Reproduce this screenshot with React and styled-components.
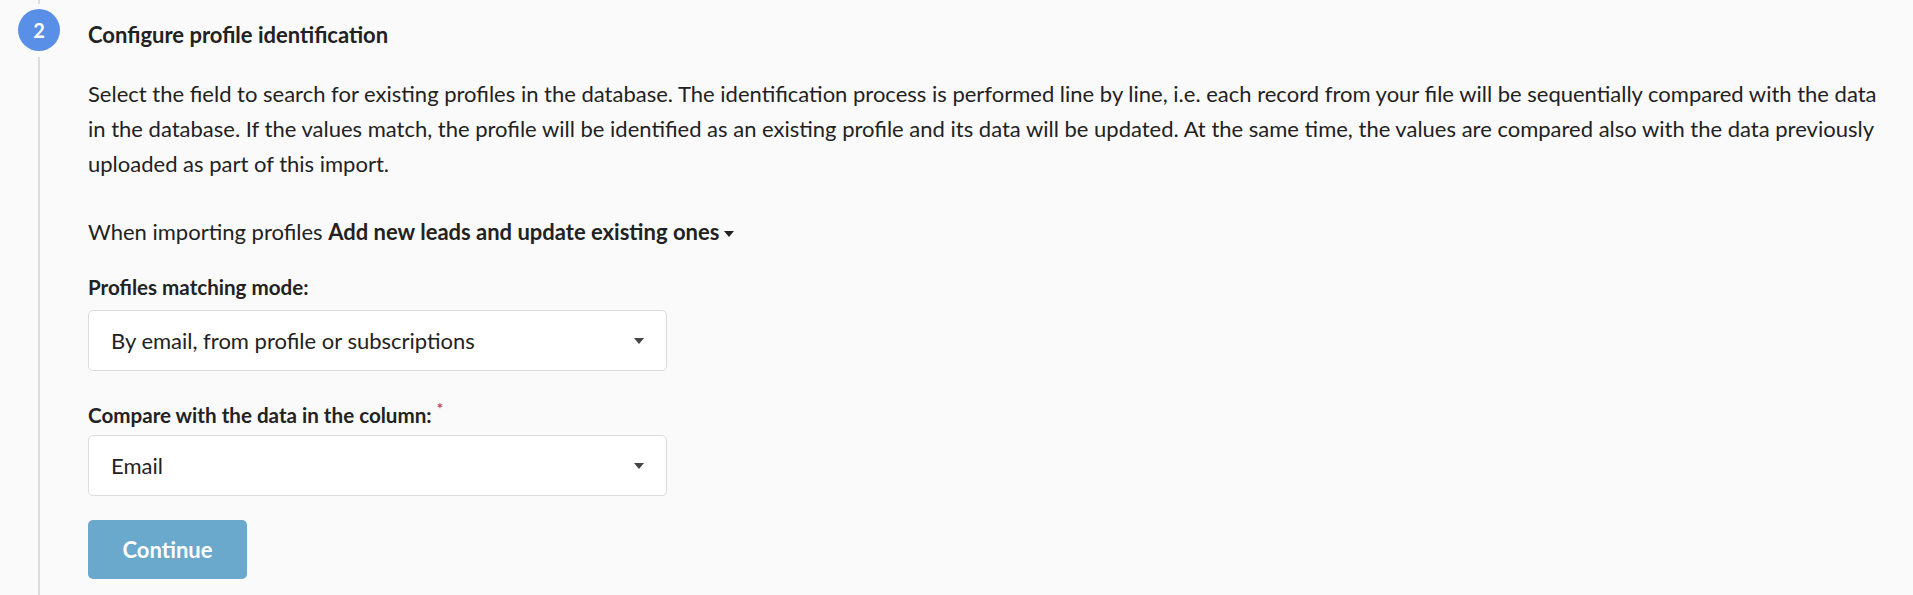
import React from 'react'
import styled, {createGlobalStyle} from 'styled-components'

const GlobalStyle = createGlobalStyle`
  html, body {
    margin: 0;
    padding: 0;
    background: #fafafa;
  }
  body {
    font-family: Lato, "Liberation Sans", sans-serif;
    color: #222;
  }
`

const Step = styled.div`
  display: flex;
  min-height: 100vh;
`

const Rail = styled.div`
  display: flex;
  flex-direction: column;
  align-items: center;
  width: 42px;
  margin-left: 18px;
  flex-shrink: 0;
`

const RailLine = styled.div`
  width: 2px;
  background: #dddddd;
  height: ${p => (p.$grow ? 'auto' : '4px')};
  flex: ${p => (p.$grow ? 1 : 'none')};
  margin: ${p => (p.$grow ? '6px 0 0' : '0 0 5px')};
`

const Badge = styled.div`
  width: 42px;
  height: 42px;
  border-radius: 50%;
  background: #5a8fe7;
  color: #fff;
  display: flex;
  align-items: center;
  justify-content: center;
  font-size: 20px;
  font-weight: 700;
`

const Content = styled.div`
  flex: 1;
  margin-left: 28px;
  padding-right: 30px;
  padding-bottom: 20px;
`

const Title = styled.h3`
  margin: 20px 0 0;
  font-size: 22px;
  line-height: 30px;
  font-weight: 700;
`

const Text = styled.p`
  margin: 26px 0 0;
  font-size: 22px;
  line-height: 35px;
`

const ModeLine = styled.div`
  margin-top: 33px;
  font-size: 22px;
  line-height: 35px;
`

const ModeToggle = styled.span`
  font-weight: 700;
  cursor: pointer;
  white-space: nowrap;
`

const Caret = styled.span`
  display: inline-block;
  width: 0;
  height: 0;
  margin-left: 5px;
  vertical-align: middle;
  border-left: 5px solid transparent;
  border-right: 5px solid transparent;
  border-top: 6px solid ${p => p.$color || '#222'};
`

const Field = styled.div`
  margin-top: ${p => p.$top}px;
`

const Label = styled.label`
  display: block;
  font-size: 20.6px;
  line-height: 24px;
  font-weight: 700;
`

const Required = styled.sup`
  color: #c6465a;
  font-size: 15px;
  margin-left: 5px;
  vertical-align: 9px;
  line-height: 0;
`

const Select = styled.div`
  margin-top: ${p => p.$gap}px;
  width: 579px;
  height: 61px;
  box-sizing: border-box;
  background: #fff;
  border: 1px solid #dcdcdc;
  border-radius: 5px;
  display: flex;
  align-items: center;
  justify-content: space-between;
  padding: 0 22px 0 22px;
  font-size: 22px;
`

const Button = styled.button`
  margin-top: 24px;
  width: 159px;
  height: 59px;
  border: none;
  border-radius: 5px;
  background: #6aa9cb;
  color: #fff;
  font-family: inherit;
  font-size: 22px;
  font-weight: 700;
  cursor: pointer;
`

export default function App() {
  return (
    <>
      <GlobalStyle />
      <Step>
        <Rail>
          <RailLine />
          <Badge>2</Badge>
          <RailLine $grow />
        </Rail>
        <Content>
          <Title>Configure profile identification</Title>
          <Text>
            Select the field to search for existing profiles in the database. The identification process is performed line by line, i.e. each record from your file will be sequentially compared with the data in the database. If the values match, the profile will be identified as an existing profile and its data will be updated. At the same time, the values are compared also with the data previously uploaded as part of this import.
          </Text>
          <ModeLine>
            When importing profiles <ModeToggle>Add new leads and update existing ones<Caret /></ModeToggle>
          </ModeLine>
          <Field $top={26}>
            <Label>Profiles matching mode:</Label>
            <Select $gap={11}>
              <span>By email, from profile or subscriptions</span>
              <Caret $color="#444" />
            </Select>
          </Field>
          <Field $top={32}>
            <Label>Compare with the data in the column:<Required>*</Required></Label>
            <Select $gap={8}>
              <span>Email</span>
              <Caret $color="#444" />
            </Select>
          </Field>
          <Button>Continue</Button>
        </Content>
      </Step>
    </>
  )
}
